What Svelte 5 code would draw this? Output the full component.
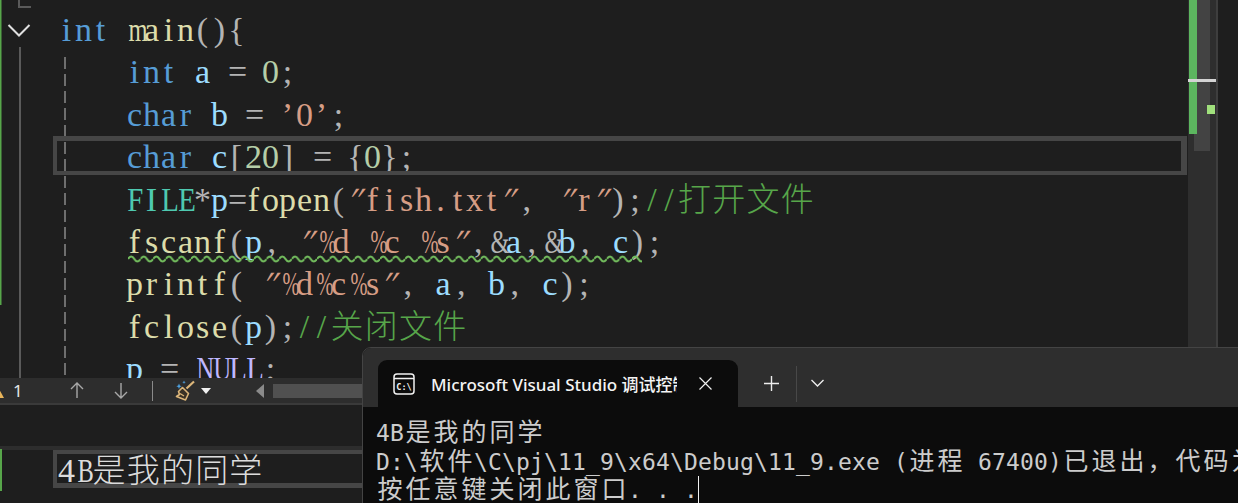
<script>
  const codeLines = [
    [['int', 'kw'], [' ', ''], ['main', 'fn'], ['()', 'pn'], ['{', 'pn']],
    [['    int', 'kw'], [' ', ''], ['a', 'var'], [' = ', 'pn'], ['0', 'num'], [';', 'pn']],
    [['    char', 'kw'], [' ', ''], ['b', 'var'], [' = ', 'pn'], ['’0’', 'str'], [';', 'pn']],
    [['    char', 'kw'], [' ', ''], ['c', 'var'], ['[', 'pn'], ['20', 'num'], ['] = {', 'pn'], ['0', 'num'], ['};', 'pn']],
    [['    ', ''], ['FILE', 'type'], ['*', 'pn'], ['p', 'var'], ['=', 'pn'], ['fopen', 'fn'], ['(', 'pn'], ['″fish.txt″', 'str'], [', ', 'pn'], ['″r″', 'str sp'], [');', 'pn'], ['//打开文件', 'cm']],
    [['    ', ''], ['fscanf', 'fn'], ['(', 'pn'], ['p', 'var'], [', ', 'pn'], ['″%d %c %s″', 'str'], [',&', 'pn'], ['a', 'var'], [',&', 'pn'], ['b', 'var'], [', ', 'pn'], ['c', 'var'], [');', 'pn']],
    [['    ', ''], ['printf', 'fn'], ['( ', 'pn'], ['″%d%c%s″', 'str'], [', ', 'pn'], ['a', 'var'], [', ', 'pn'], ['b', 'var'], [', ', 'pn'], ['c', 'var'], [');', 'pn']],
    [['    ', ''], ['fclose', 'fn'], ['(', 'pn'], ['p', 'var'], [');', 'pn'], ['//关闭文件', 'cm']],
    [['    ', ''], ['p', 'var'], [' = ', 'pn'], ['NULL', 'macro'], [';', 'pn']]
  ];

  const consoleLines = [
    '4B是我的同学',
    'D:\\软件\\C\\pj\\11_9\\x64\\Debug\\11_9.exe (进程 67400)已退出，代码为 0。',
    '按任意键关闭此窗口. . .'
  ];

  const isWide = (c) => /[\u3000-\u9fff\uff00-\uffef]/.test(c);
  const cells = (text) => Array.from(text);
</script>

{#snippet grid(text)}{#each cells(text) as c}<span
    class="cell"
    class:wide={isWide(c)}
    class:tight={'m&NUB'.includes(c)}
    class:tighter={c === '%'}
    class:snug={'FEL'.includes(c)}
    class:slant={c === '″'}
    class:comma={c === ','}>{c}</span>{/each}{/snippet}

<div class="screen">
  <div class="editor">
    <svg class="gutter" width="53" height="378" viewBox="0 0 53 378">
      <rect x="0" y="0" width="1.5" height="305" fill="#57a64a" />
      <path d="M19 0v7h12" fill="none" stroke="#5a5a5a" stroke-width="2" />
      <path d="M8.500 25l10.500 10.500 10.500-10.500" fill="none" stroke="#e0e0e0" stroke-width="2" />
      <path d="M20 47v331" stroke="#5a5a5a" stroke-width="2" />
    </svg>

    <div class="code">
      {#each codeLines as line, i}
        <div class="line" class:current={i === 3}>
          {#each line as [text, kind]}<span class={kind}>{@render grid(text)}</span>{/each}
          {#if i === 5}
            <svg class="squiggle" width="514" height="8">
              <defs>
                <pattern id="wave" width="12.6" height="8" patternUnits="userSpaceOnUse">
                  <path d="M0 4q3.150-5 6.300 0t6.300 0" fill="none" stroke="#71bb5c" stroke-width="2.200" />
                </pattern>
              </defs>
              <rect width="514" height="8" fill="url(#wave)" />
            </svg>
          {/if}
        </div>
      {/each}
    </div>

    <div class="scrollbar">
      <div class="thumb"></div>
      <div class="changes"></div>
      <div class="caret-mark"></div>
      <div class="warn-mark"></div>
    </div>
  </div>

  <div class="toolbar">
    <svg class="warn" width="4" height="9" viewBox="0 0 4 9"><path d="M-4 0h3l5 9h-8z" fill="#e8b45a" /></svg>
    <span class="count">1</span>
    <svg class="up" width="14" height="17" viewBox="0 0 14 17"><path d="M7 16V1M1 7l6-6 6 6" fill="none" stroke="#a8a8a8" stroke-width="1.400" /></svg>
    <svg class="down" width="14" height="17" viewBox="0 0 14 17"><path d="M7 1v15M1 10l6 6 6-6" fill="none" stroke="#a8a8a8" stroke-width="1.400" /></svg>
    <span class="divider"></span>
    <svg class="broom" width="21" height="21" viewBox="0 0 21 21">
      <path d="M20 1.500l-7.500 7" stroke="#dcb67a" stroke-width="2.200" fill="none" />
      <path d="M8.500 7.500l6 6-3 6.500-9-3.500 3-2-1-3z" fill="#3a3226" stroke="#dcb67a" stroke-width="1.600" stroke-linejoin="round" />
      <path d="M6 13.500l4 2.500" stroke="#dcb67a" stroke-width="1.300" />
      <path d="M5 3.500l.8 1.900 1.900.8-1.900.8-.8 1.900-.8-1.900-1.900-.8 1.900-.8zM10 .5l.5 1.200 1.200.5-1.200.5-.5 1.200-.5-1.200-1.200-.5 1.200-.5z" fill="#4ea1e0" />
    </svg>
    <svg class="drop" width="10" height="6" viewBox="0 0 10 6"><path d="M0 0h10l-5 6z" fill="#f0f0f0" /></svg>
    <svg class="left" width="8" height="14" viewBox="0 0 8 14"><path d="M8 0v14L0 7z" fill="#8a8a8a" /></svg>
    <div class="hthumb"></div>
  </div>

  <div class="output">
    <div class="output-line">{@render grid('4B是我的同学')}</div>
  </div>

  <div class="terminal">
    <div class="titlebar">
      <div class="tab">
        <svg class="term-icon" width="22" height="22" viewBox="0 0 22 22">
          <rect x="1" y="1" width="20" height="20" rx="3" fill="none" stroke="#f2f2f2" stroke-width="1.500" />
          <path d="M1 5.500h20" stroke="#f2f2f2" stroke-width="1.500" />
          <text x="11" y="16.500" text-anchor="middle" class="term-glyph">C:\</text>
        </svg>
        <span class="tab-title">Microsoft Visual Studio 调试控制台</span>
        <svg class="tab-close" width="13" height="13" viewBox="0 0 13 13"><path d="M.5.5l12 12M12.500.5l-12 12" stroke="#f0f0f0" stroke-width="1.200" /></svg>
      </div>
      <svg class="plus" width="15" height="15" viewBox="0 0 15 15"><path d="M7.500 0v15M0 7.500h15" stroke="#ededed" stroke-width="1.400" /></svg>
      <span class="tsep"></span>
      <svg class="chev" width="13" height="8" viewBox="0 0 13 8"><path d="M.5 1l6 6 6-6" fill="none" stroke="#ededed" stroke-width="1.400" /></svg>
    </div>
    <div class="term-body">
      {#each consoleLines as text, i}
        <div class="term-line">{#each cells(text) as c}<span class="tcell" class:wide={isWide(c)}>{c}</span>{/each}{#if i === 2}<span class="cursor"></span>{/if}</div>
      {/each}
    </div>
  </div>
</div>

<style>
  :global(body) {
    margin: 0;
    background: #1e1e1e;
  }

  .screen {
    position: relative;
    width: 1238px;
    height: 503px;
    overflow: hidden;
    background: #1e1e1e;
  }

  .editor {
    display: flex;
    height: 378px;
    overflow: hidden;
  }

  .gutter {
    flex: none;
    display: block;
  }

  .code {
    position: relative;
    flex: none;
    width: 1135px;
    padding-top: 9px;
    font-family: "Liberation Serif", "Noto Sans CJK SC", serif;
    font-size: 34px;
    color: #dcdcdc;
  }

  /* dashed indent guide */
  .code::before {
    content: "";
    position: absolute;
    left: 11px;
    top: 57px;
    bottom: 0;
    width: 2px;
    background: repeating-linear-gradient(to bottom, #6e6e6e 0 12px, transparent 12px 17px);
  }

  .line {
    position: relative;
    height: 42.4px;
    line-height: 42.4px;
    padding-left: 5px;
    white-space: nowrap;
  }

  .line.current::before {
    content: "";
    position: absolute;
    left: 0;
    right: 1px;
    top: 0;
    height: 39px;
    box-sizing: border-box;
    border: solid #464646;
    border-width: 5px 6px 4px 4px;
  }

  .squiggle {
    position: absolute;
    left: 75px;
    top: 34px;
  }

  .cell {
    display: inline-block;
    width: 17px;
    text-align: center;
    white-space: pre;
  }

  .cell.wide {
    width: 34.2px;
    font-size: 33px;
    font-weight: 300;
  }

  .cell.comma { width: 19.5px; }
  .cell.tight { transform: scaleX(0.72); }
  .cell.tighter { transform: scaleX(0.6); }
  .cell.snug { transform: scaleX(0.85); }
  .cell.slant { transform: skewX(-24deg); }

  .sp { margin-left: 5px; }

  .kw { color: #569cd6; }
  .fn { color: #dcdcaa; }
  .var { color: #9cdcfe; }
  .pn { color: #b4b4b4; }
  .num { color: #b5cea8; }
  .str { color: #d69d85; }
  .cm { color: #57a64a; }
  .type { color: #4ec9b0; }
  .macro { color: #beb7ff; }

  .scrollbar {
    position: relative;
    flex: none;
    width: 28px;
    height: 378px;
    background: #2e2e2e;
    border-right: 2px solid #3e3e3e;
  }

  .thumb {
    position: absolute;
    left: 6px;
    top: 0;
    width: 16px;
    height: 151px;
    background: #434343;
  }

  .changes {
    position: absolute;
    left: 1px;
    top: 0;
    width: 8px;
    height: 134px;
    background: #5cb65f;
  }

  .caret-mark {
    position: absolute;
    left: 0;
    top: 79px;
    width: 28px;
    height: 3px;
    background: #d4d4d4;
  }

  .warn-mark {
    position: absolute;
    left: 19px;
    top: 105px;
    width: 8px;
    height: 9px;
    background: #a0e07c;
  }

  .toolbar {
    display: flex;
    align-items: center;
    height: 25px;
    background: #2d2d2d;
    border-bottom: 2px solid #3a3a3a;
  }

  .warn { margin-top: 5px; }

  .count {
    width: 10px;
    margin-left: 9px;
    font: 17px "Noto Sans", sans-serif;
    color: #e4e4e4;
  }

  .up { margin-left: 47px; }
  .down { margin-left: 30px; }

  .divider {
    width: 1px;
    height: 20px;
    margin-left: 24px;
    background: #8a8a8a;
  }

  .broom { margin-left: 21px; }
  .drop { margin-left: 6px; }
  .left { margin-left: 45px; }

  .hthumb {
    flex: none;
    width: 120px;
    height: 14px;
    margin-left: 9px;
    background: #505050;
  }

  .output {
    position: relative;
    height: 98px;
    box-sizing: border-box;
    padding-top: 45px;
    padding-left: 53px;
  }

  .output::before {
    content: "";
    position: absolute;
    left: 0;
    right: 0;
    top: 41px;
    height: 4px;
    background: #2d2d2d;
  }

  .output::after {
    content: "";
    position: absolute;
    left: 0;
    top: 44px;
    width: 1.500px;
    height: 42px;
    background: #57a64a;
  }

  .output-line {
    box-sizing: border-box;
    height: 38px;
    line-height: 33px;
    padding-left: 1px;
    border: solid #464646;
    border-width: 4px 4px 5px 4px;
    white-space: nowrap;
    font-family: "Liberation Serif", "Noto Sans CJK SC", serif;
    font-size: 34px;
    color: #dcdcdc;
  }

  .terminal {
    position: absolute;
    left: 362px;
    top: 347px;
    width: 900px;
    height: 170px;
    box-sizing: border-box;
    border: 1px solid #444;
    border-radius: 9px;
    background: #0c0c0c;
    overflow: hidden;
  }

  .titlebar {
    display: flex;
    align-items: flex-end;
    height: 59px;
    box-sizing: border-box;
    padding-left: 15px;
    background: #2e2e2e;
  }

  .tab {
    display: flex;
    align-items: center;
    flex: none;
    width: 360px;
    height: 47px;
    box-sizing: border-box;
    padding-left: 15px;
    background: #0c0c0c;
    border-radius: 9px 9px 0 0;
  }

  .term-icon { flex: none; }

  .term-glyph {
    font: bold 8.500px "DejaVu Sans Mono", monospace;
    fill: #f2f2f2;
  }

  .tab-title {
    flex: none;
    width: 246px;
    margin-left: 16px;
    overflow: hidden;
    white-space: nowrap;
    font: 500 17px "Noto Sans", "Noto Sans CJK SC", sans-serif;
    color: #f4f4f4;
  }

  .tab-close {
    flex: none;
    margin-left: 22px;
  }

  .plus {
    flex: none;
    margin: 0 0 16px 26px;
  }

  .tsep {
    flex: none;
    width: 1px;
    height: 36px;
    margin: 0 0 5px 17px;
    background: #484848;
  }

  .chev {
    flex: none;
    margin: 0 0 20px 14px;
  }

  .term-body {
    padding: 12px 0 0 13px;
    font-family: "DejaVu Sans Mono", "Noto Sans CJK SC", monospace;
    font-size: 23px;
    color: #cccccc;
  }

  .term-line {
    position: relative;
    height: 28.500px;
    line-height: 28.500px;
    white-space: nowrap;
  }

  .tcell {
    display: inline-block;
    width: 14px;
    text-align: center;
    white-space: pre;
  }

  .tcell.wide {
    width: 28px;
    font-size: 25px;
  }

  .cursor {
    display: inline-block;
    width: 1px;
    height: 28px;
    background: #f2f2f2;
    vertical-align: top;
  }
</style>
